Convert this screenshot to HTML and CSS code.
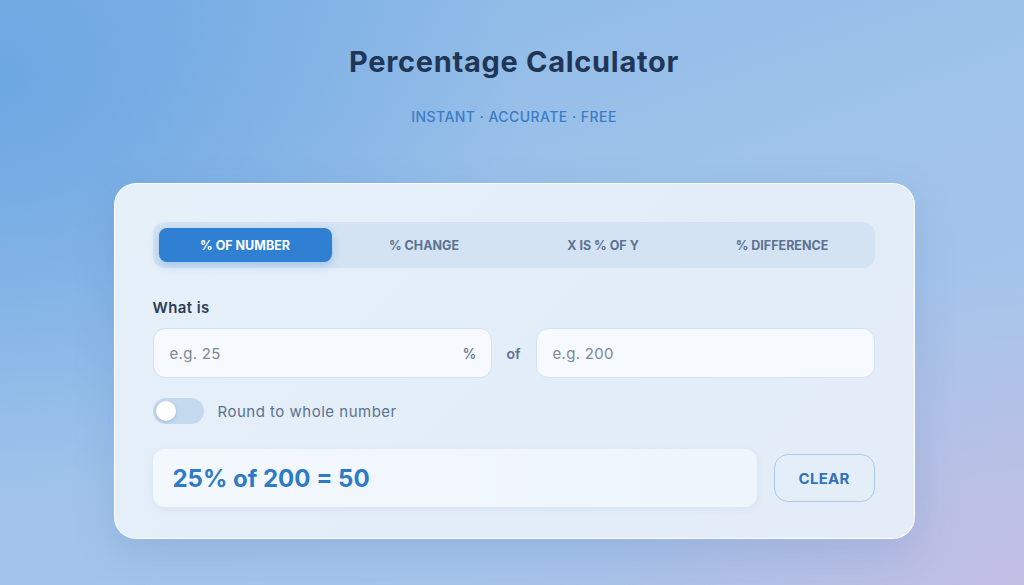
FILE: index.html
```html
<!DOCTYPE html>
<html lang="en">
<head>
<meta charset="utf-8">
<title>Percentage Calculator</title>
<link rel="stylesheet" href="styles.css">
</head>
<body>
<main class="page">
  <h1 class="title">Percentage Calculator</h1>
  <p class="subtitle">INSTANT · ACCURATE · FREE</p>
  <section class="card">
    <nav class="tabs">
      <button class="tab active">% OF NUMBER</button>
      <button class="tab">% CHANGE</button>
      <button class="tab">X IS % OF Y</button>
      <button class="tab">% DIFFERENCE</button>
    </nav>
    <label class="label">What is</label>
    <div class="inputs">
      <div class="field">
        <input class="input" placeholder="e.g. 25">
        <span class="suffix">%</span>
      </div>
      <span class="of">of</span>
      <div class="field">
        <input class="input" placeholder="e.g. 200">
      </div>
    </div>
    <div class="toggle-row">
      <span class="toggle"><span class="knob"></span></span>
      <span class="toggle-label">Round to whole number</span>
    </div>
    <div class="result-row">
      <div class="result">25% of 200 = 50</div>
      <button class="clear">CLEAR</button>
    </div>
  </section>
</main>
</body>
</html>
```
FILE: styles.css
```css
* { box-sizing: border-box; }
html, body { margin: 0; height: 100%; }
body {
  font-family: Inter, "Open Sans", "DejaVu Sans", sans-serif;
  background:
    radial-gradient(ellipse 420px 320px at 1024px 585px, rgba(196,190,228,0.9), rgba(196,190,228,0) 100%),
    radial-gradient(ellipse 520px 420px at 0px 80px, rgba(104,164,226,0.85), rgba(104,164,226,0) 100%),
    linear-gradient(160deg, #86b6e6 0%, #9fc3ea 45%, #a6c4ea 75%, #b0c0e6 100%);
  overflow: hidden;
}
.page {
  height: 585px;
  display: flex;
  flex-direction: column;
  align-items: center;
  padding-top: 44px;
  padding-left: 4px;
}
.title {
  margin: 0;
  font-size: 29px;
  line-height: 36px;
  font-weight: 700;
  color: #1f3656;
  letter-spacing: 0.7px;
}
.subtitle {
  margin: 29px 0 0;
  font-size: 14px;
  line-height: 16px;
  font-weight: 500;
  color: #3b7cc6;
  letter-spacing: 0.45px;
}
.card {
  margin-top: 58px;
  width: 801px;
  padding: 38px 39px 31px 38px;
  border-radius: 22px;
  background: linear-gradient(135deg, #e6f0f9 0%, #e2edf8 60%, #e4ecf8 100%);
  border: 1px solid rgba(255,255,255,0.85);
  box-shadow: 0 14px 40px rgba(60,110,170,0.18);
}
.tabs {
  display: grid;
  grid-template-columns: repeat(4, 1fr);
  gap: 6px;
  padding: 6px;
  height: 46px;
  border-radius: 12px;
  background: #d3e3f3;
}
.tab {
  border: 0;
  background: transparent;
  border-radius: 8px;
  font-family: inherit;
  font-size: 12.5px;
  font-weight: 700;
  color: #5d7190;
  letter-spacing: 0;
  padding: 0;
}
.tab.active {
  background: #2f7fd3;
  color: #ffffff;
  box-shadow: 0 3px 10px rgba(47,127,211,0.3);
}
.label {
  display: block;
  margin-top: 30px;
  font-size: 15px;
  line-height: 20px;
  font-weight: 600;
  color: #2b3d56;
  letter-spacing: 0.4px;
}
.inputs {
  margin-top: 10px;
  display: flex;
  align-items: center;
  gap: 15px;
}
.field {
  flex: 1;
  height: 50px;
  display: flex;
  align-items: center;
  background: #f6f9fd;
  border: 1px solid #d3e2f0;
  border-radius: 12px;
  padding: 0 14px 0 16px;
}
.input {
  flex: 1;
  border: 0;
  background: transparent;
  font-family: inherit;
  font-size: 15px;
  color: #2b3d56;
  outline: none;
  padding: 0;
  min-width: 0;
  letter-spacing: 0.3px;
}
.input::placeholder { color: #7c8797; }
.suffix {
  font-size: 14px;
  font-weight: 500;
  color: #5d7190;
}
.of {
  width: 14px;
  font-size: 14px;
  font-weight: 600;
  color: #5d7190;
}
.toggle-row {
  margin-top: 20px;
  display: flex;
  align-items: center;
  gap: 14px;
}
.toggle {
  width: 51px;
  height: 26px;
  border-radius: 13px;
  background: #c4d8ee;
  display: flex;
  align-items: center;
  padding: 0 3px;
}
.knob {
  width: 20px;
  height: 20px;
  border-radius: 50%;
  background: #ffffff;
  box-shadow: 0 1px 3px rgba(40,80,130,0.25);
}
.toggle-label {
  font-size: 15px;
  color: #5d7190;
  letter-spacing: 0.5px;
}
.result-row {
  margin-top: 25px;
  display: flex;
  align-items: center;
  gap: 17px;
}
.result {
  width: 606px;
  height: 58px;
  display: flex;
  align-items: center;
  padding-left: 20px;
  border-radius: 12px;
  background: linear-gradient(90deg, #f3f8fd, #eef5fc);
  box-shadow: 0 2px 8px rgba(60,110,170,0.08);
  font-size: 24px;
  font-weight: 700;
  color: #2e7ac6;
}
.clear {
  width: 101px;
  height: 48px;
  border: 1px solid #aac9e7;
  border-radius: 14px;
  background: #e3eef9;
  font-family: inherit;
  font-size: 15px;
  font-weight: 700;
  color: #2f72bb;
  letter-spacing: 0.3px;
}
```
